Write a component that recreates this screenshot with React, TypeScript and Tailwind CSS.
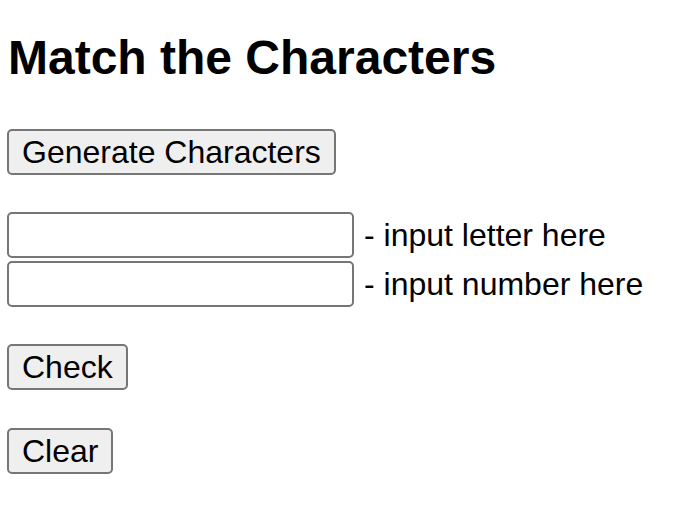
import React, { useState } from 'react';

export default function App() {
  const [letter, setLetter] = useState('');
  const [number, setNumber] = useState('');

  const btn =
    'block border-2 border-[#767676] rounded-[5px] bg-[#efefef] px-[13px] py-[3px] text-[32px] leading-[36px] text-black';

  return (
    <div className="min-h-[516px] bg-white pl-[7px] pt-[30px] font-['Liberation_Sans',Arial,sans-serif] text-black">
      <h1 className="text-[48px] font-bold leading-[56px] pl-[1px]">Match the Characters</h1>

      <button className={`${btn} mt-[43px]`}>Generate Characters</button>

      <div className="mt-[37px] flex flex-col gap-[3px]">
        <div className="flex items-center gap-[10px]">
          <input
            value={letter}
            onChange={(e) => setLetter(e.target.value)}
            className="h-[46px] w-[347px] rounded-[5px] border-2 border-[#767676] bg-white px-2 text-[32px]"
          />
          <span className="text-[32px] leading-[36px]">- input letter here</span>
        </div>
        <div className="flex items-center gap-[10px]">
          <input
            value={number}
            onChange={(e) => setNumber(e.target.value)}
            className="h-[46px] w-[347px] rounded-[5px] border-2 border-[#767676] bg-white px-2 text-[32px]"
          />
          <span className="text-[32px] leading-[36px]">- input number here</span>
        </div>
      </div>

      <button className={`${btn} mt-[37px]`}>Check</button>
      <button className={`${btn} mt-[38px]`}>Clear</button>
    </div>
  );
}
